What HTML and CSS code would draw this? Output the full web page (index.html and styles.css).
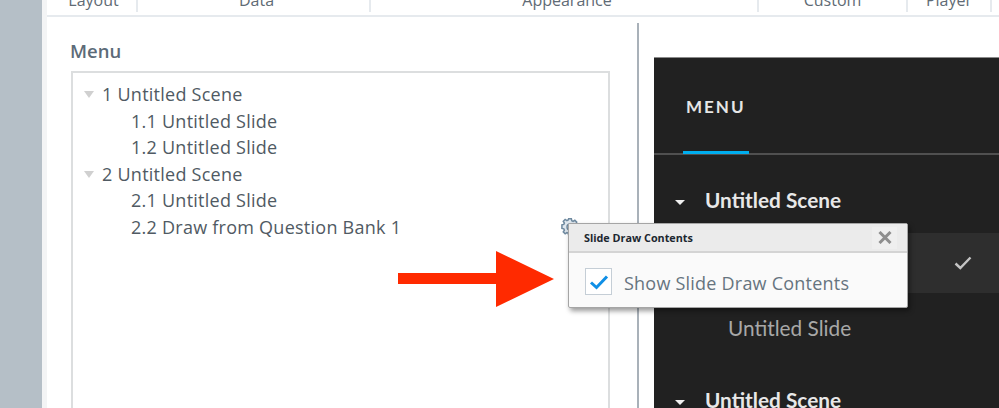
FILE: index.html
```html
<!DOCTYPE html>
<html lang="en">
<head>
<meta charset="UTF-8">
<title>Menu Editor</title>
<link rel="stylesheet" href="styles.css">
</head>
<body>

<div class="rail"></div>

<div class="editor">
    <div class="tabs">
        <div class="tab tab-layout">Layout</div>
        <div class="tab tab-data">Data</div>
        <div class="tab tab-appearance">Appearance</div>
        <div class="tab tab-custom">Custom</div>
        <div class="tab tab-player">Player</div>
    </div>

    <div class="panes">
        <div class="menu-pane">
            <h2>Menu</h2>
            <div class="tree">
                <div class="scene"><span class="caret"></span>1 Untitled Scene</div>
                <div class="slide">1.1 Untitled Slide</div>
                <div class="slide">1.2 Untitled Slide</div>
                <div class="scene"><span class="caret"></span>2 Untitled Scene</div>
                <div class="slide">2.1 Untitled Slide</div>
                <div class="slide">2.2 Draw from Question Bank 1</div>
            </div>
        </div>

        <div class="preview-pane">
            <div class="player">
                <div class="player-head">
                    <div class="player-title">MENU</div>
                </div>
                <div class="p-scene"><span class="p-caret"></span>Untitled Scene</div>
                <!-- the popup covers this row's label -->
                <div class="p-slide p-current">
                    <svg class="p-check" width="18" height="14" viewBox="0 0 18 14"><path d="M1.5 7.5 L6.3 12 L16.5 1.5" fill="none" stroke="#c4c4c4" stroke-width="2.4"/></svg>
                </div>
                <div class="p-slide">Untitled Slide</div>
                <div class="p-scene p-scene-next"><span class="p-caret"></span>Untitled Scene</div>
            </div>
        </div>
    </div>
</div>

<!-- gear sits behind the popup corner -->
<svg class="gear" width="20" height="20" viewBox="0 0 20 20">
    <path d="M8.4 1.5h3.2l.5 2.4 1.5.7 2.1-1.3 2.2 2.2-1.3 2.1.7 1.5 2.2.5v3.2l-2.2.5-.7 1.5 1.3 2.1-2.2 2.2-2.1-1.3-1.5.7-.5 2.2H8.4l-.5-2.2-1.5-.7-2.1 1.3-2.2-2.2 1.3-2.1-.7-1.5-2.2-.5V8.6l2.2-.5.7-1.5-1.3-2.1 2.2-2.2 2.1 1.3 1.5-.7z" fill="#dfe7ee" stroke="#6f8aa0" stroke-width="1.8" transform="translate(1.5 1.5) scale(.85)"/>
    <circle cx="10" cy="11" r="3" fill="#fff" stroke="#6f8aa0" stroke-width="1.4"/>
</svg>

<div class="popup">
    <div class="popup-head">
        <span class="popup-title">Slide Draw Contents</span>
        <span class="popup-close">
            <svg width="14" height="13" viewBox="0 0 14 13"><path d="M1.5 1 L12.5 12 M12.5 1 L1.5 12" stroke="#8e8e8e" stroke-width="3"/></svg>
        </span>
    </div>
    <div class="popup-body">
        <span class="checkbox">
            <svg width="20" height="16" viewBox="0 0 20 16"><path d="M2 8.5 L7.5 13.5 L18 2.5" fill="none" stroke="#0f8fe6" stroke-width="3"/></svg>
        </span>
        <span class="popup-label">Show Slide Draw Contents</span>
    </div>
</div>

<svg class="arrow" width="156" height="56" viewBox="0 0 156 56">
    <path d="M0 22 H98 V0 L156 28 L98 56 V33 H0 Z" fill="#ff2a00"/>
</svg>

</body>
</html>
```

FILE: styles.css
```css
html, body {
    height: 408px;
    overflow: hidden;
}

body {
    margin: 0;
    display: flex;
    background-color: #fff;
    font-family: "Open Sans", sans-serif;
    color: #4f5b66;
}

.rail {
    width: 42px;
    flex: none;
    background-color: #b5bfc7;
    border-right: 5px solid #f3f4f5;
}

.editor {
    flex: 1;
    min-width: 0;
    display: flex;
    flex-direction: column;
}

.tabs {
    display: flex;
    height: 15px;
    flex: none;
    overflow: hidden;
    border-bottom: 2px solid #e6eaee;
    font-size: 16px;
    color: #5f6b75;
}

.tab {
    height: 12px;
    line-height: 0;
    text-align: center;
    border-right: 2px solid #e6eaee;
    box-sizing: border-box;
}

.tab-layout { width: 91px; padding-left: 4px; }
.tab-data { width: 233px; padding-left: 6px; }
.tab-appearance { width: 388px; padding-left: 6px; }
.tab-custom { width: 149px; }
.tab-player { width: 84px; }

.panes {
    flex: 1;
    display: flex;
    min-height: 0;
    overflow: hidden;
    padding-top: 6px;
}

.menu-pane {
    width: 592px;
    flex: none;
    box-sizing: border-box;
    padding: 0 27px 0 24px;
    border-right: 2px solid #a9b1b9;
}

.menu-pane h2 {
    margin: 17px 0 9px -1px;
    font-size: 18.5px;
    line-height: 22px;
    font-weight: 600;
    color: #5c6b78;
}

.tree {
    height: 400px;
    box-sizing: border-box;
    padding: 8px 0 0 11px;
    border: 2px solid #dcdedf;
    font-size: 18px;
    line-height: 26.6px;
    letter-spacing: .25px;
    color: #505a63;
}

.caret {
    display: inline-block;
    width: 0;
    height: 0;
    margin: 0 8px 3px 0;
    border-left: 5.5px solid transparent;
    border-right: 5.5px solid transparent;
    border-top: 7px solid #d0d0d0;
}

.slide {
    padding-left: 47px;
}

.preview-pane {
    flex: 1;
    min-width: 0;
    padding: 34px 0 0 15px;
}

.player {
    height: 400px;
    background-color: #212121;
    border-top: 1px solid #8a8a8a;
    font-family: Lato, sans-serif;
}

.player-head {
    height: 97px;
    box-sizing: border-box;
    border-bottom: 2px solid #505050;
    padding: 39px 0 0 29px;
}

.player-title {
    display: inline-block;
    height: 57px;
    padding: 0 3px;
    box-sizing: border-box;
    border-bottom: 3px solid #00aeef;
    font-size: 17px;
    line-height: 20px;
    font-weight: 700;
    letter-spacing: 2px;
    color: #e6e6e6;
}

.p-scene {
    padding: 33px 0 0 21px;
    font-size: 20.8px;
    line-height: 24px;
    font-weight: 700;
    color: #e8e8e8;
}

.p-caret {
    display: inline-block;
    width: 0;
    height: 0;
    margin: 0 20px 3px 0;
    border-left: 5px solid transparent;
    border-right: 5px solid transparent;
    border-top: 5px solid #f0f0f0;
}

.p-slide {
    padding-left: 74px;
    font-size: 20.8px;
    line-height: 24px;
    color: #a8a8a8;
    margin-top: 23px;
}

.p-current {
    display: flex;
    align-items: center;
    justify-content: flex-end;
    height: 60px;
    margin-top: 21px;
    padding-right: 27px;
    background-color: #2e2e2e;
}

.p-scene-next {
    padding-top: 48px;
}

.gear {
    position: absolute;
    left: 560px;
    top: 216px;
}

.popup {
    position: absolute;
    left: 568px;
    top: 223px;
    width: 340px;
    height: 85px;
    box-sizing: border-box;
    background-color: #fafafa;
    border: 1px solid #a5a5a5;
    border-radius: 2px;
    box-shadow: 2px 3px 5px rgba(0, 0, 0, .4);
}

.popup-head {
    display: flex;
    align-items: center;
    justify-content: space-between;
    height: 27px;
    padding: 0 10px 0 15px;
    background-color: #ebebeb;
    border-bottom: 2px solid #d4d4d4;
}

.popup-title {
    font-size: 10.8px;
    font-weight: 700;
    color: #1c2730;
}

.popup-close {
    display: flex;
    align-items: center;
    justify-content: center;
    width: 25px;
    height: 22px;
    background-color: #efefef;
}

.popup-body {
    display: flex;
    align-items: center;
    height: 51px;
    padding: 3px 0 0 16px;
}

.checkbox {
    display: flex;
    align-items: center;
    justify-content: center;
    width: 27px;
    height: 27px;
    box-sizing: border-box;
    background-color: #fff;
    border: 1px solid #c5ced6;
}

.popup-label {
    margin: 3px 0 0 12px;
    font-size: 18px;
    letter-spacing: .22px;
    color: #66747f;
}

.arrow {
    position: absolute;
    left: 398px;
    top: 251px;
}
```
